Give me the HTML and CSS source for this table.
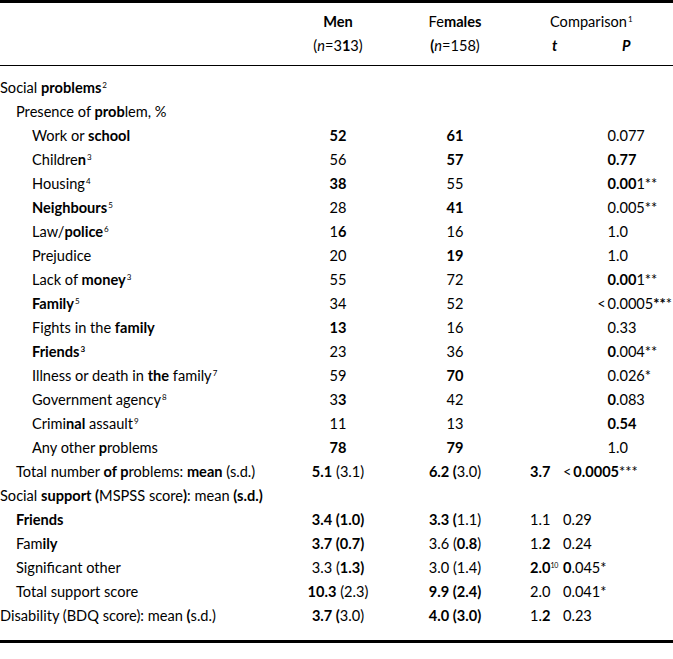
FILE: index.html
```html
<!DOCTYPE html>
<html lang="en">
<head>
<meta charset="utf-8">
<title>Social problems, support and disability</title>
<link rel="stylesheet" href="styles.css">
</head>
<body>
<table class="tbl">
  <colgroup>
    <col class="c-lab"><col class="c-men"><col class="c-fem"><col class="c-t"><col class="c-p">
  </colgroup>
  <thead>
    <tr class="h1">
      <th></th>
      <th class="num"><b>Men</b></th>
      <th class="num">Fe<b>males</b></th>
      <th class="cmp" colspan="2">Comparison<sup>1</sup></th>
    </tr>
    <tr class="h2">
      <th></th>
      <th class="num">(<i>n</i>=3<b>1</b>3)</th>
      <th class="num"><b>(</b><i>n</i>=158)</th>
      <th class="ht"><i>t</i></th>
      <th class="hp"><i>P</i></th>
    </tr>
  </thead>
  <tbody>
    <tr class="first"><td class="l0">Social <b>problems</b><sup>2</sup></td><td></td><td></td><td></td><td></td></tr>
    <tr><td class="l1">Presence of <b>prob</b>lem, %</td><td></td><td></td><td></td><td></td></tr>
    <tr><td class="l2">Work or <b>school</b></td><td class="num"><b>52</b></td><td class="num"><b>61</b></td><td></td><td class="pd"><span class="int">0</span>.077</td></tr>
    <tr><td class="l2">Childre<b>n</b><sup>3</sup></td><td class="num">56</td><td class="num"><b>57</b></td><td></td><td class="pd"><span class="int"><b>0</b></span><b>.77</b></td></tr>
    <tr><td class="l2">Housing<sup>4</sup></td><td class="num"><b>38</b></td><td class="num">55</td><td></td><td class="pd"><span class="int"><b>0</b></span><b>.00</b>1**</td></tr>
    <tr><td class="l2"><b>Neighbours</b><sup>5</sup></td><td class="num">28</td><td class="num"><b>41</b></td><td></td><td class="pd"><span class="int">0</span>.005**</td></tr>
    <tr><td class="l2">Law/<b>police</b><sup>6</sup></td><td class="num">1<b>6</b></td><td class="num">16</td><td></td><td class="pd"><span class="int">1</span>.0</td></tr>
    <tr><td class="l2">Prejudice</td><td class="num">20</td><td class="num"><b>19</b></td><td></td><td class="pd"><span class="int">1</span>.0</td></tr>
    <tr><td class="l2">Lack of <b>money</b><sup>3</sup></td><td class="num">55</td><td class="num">72</td><td></td><td class="pd"><span class="int"><b>0</b></span><b>.00</b>1**</td></tr>
    <tr><td class="l2"><b>Family</b><sup>5</sup></td><td class="num">34</td><td class="num">52</td><td></td><td class="pd"><span class="int">&lt;&#8201;0</span>.0005<b>**</b>*</td></tr>
    <tr><td class="l2">Fights in the <b>family</b></td><td class="num"><b>13</b></td><td class="num">16</td><td></td><td class="pd"><span class="int">0</span>.33</td></tr>
    <tr><td class="l2"><b>Friends<sup>3</sup></b></td><td class="num">23</td><td class="num">36</td><td></td><td class="pd"><span class="int"><b>0</b></span>.004**</td></tr>
    <tr><td class="l2">Illness or death in <b>the</b> family<sup>7</sup></td><td class="num">59</td><td class="num"><b>70</b></td><td></td><td class="pd"><span class="int">0</span>.026*</td></tr>
    <tr><td class="l2">Government agency<sup>8</sup></td><td class="num">3<b>3</b></td><td class="num">42</td><td></td><td class="pd"><span class="int"><b>0</b></span>.083</td></tr>
    <tr><td class="l2">Crimi<b>nal</b> assault<sup>9</sup></td><td class="num">11</td><td class="num">13</td><td></td><td class="pd"><span class="int"><b>0</b></span><b>.54</b></td></tr>
    <tr><td class="l2">Any other <b>p</b>roblems</td><td class="num"><b>78</b></td><td class="num"><b>79</b></td><td></td><td class="pd"><span class="int">1</span>.0</td></tr>
    <tr><td class="l1">Total number <b>of p</b>roblems: <b>mean</b> (s.d.)</td><td class="num"><b>5.1</b> (3.1)</td><td class="num"><b>6.2 (</b>3.0)</td><td class="tv"><b>3.7</b></td><td class="pv">&lt;&#8201;<b>0.0005</b>***</td></tr>
    <tr><td class="l0">Social <b>support (</b>MSPSS score<b>)</b>: mean <b>(s.d.)</b></td><td></td><td></td><td></td><td></td></tr>
    <tr><td class="l1"><b>Friends</b></td><td class="num"><b>3.4 (1.0)</b></td><td class="num"><b>3.3 (</b>1.1)</td><td class="tv">1.1</td><td class="pv">0.29</td></tr>
    <tr><td class="l1">Fam<b>ily</b></td><td class="num"><b>3.7 (0.7)</b></td><td class="num">3.6 (<b>0.8</b>)</td><td class="tv">1.<b>2</b></td><td class="pv">0.24</td></tr>
    <tr><td class="l1">Significant other</td><td class="num">3.3 (<b>1.3)</b></td><td class="num">3.0 (1.4)</td><td class="tv"><b>2.0</b><sup class="tsup">10</sup></td><td class="pv"><b>0</b>.045*</td></tr>
    <tr><td class="l1">Total support score</td><td class="num"><b>10.3</b> (2.3)</td><td class="num"><b>9.9 (2.4)</b></td><td class="tv">2.0</td><td class="pv">0.041*</td></tr>
    <tr class="last"><td class="l0">Disability (BDQ score): mean <b>(</b>s.d.)</td><td class="num"><b>3.7 (</b>3.0)</td><td class="num"><b>4.0 (3.0)</b></td><td class="tv">1.<b>2</b></td><td class="pv">0.23</td></tr>
  </tbody>
</table>
</body>
</html>
```

FILE: styles.css
```css
html, body {
  margin: 0;
  padding: 0;
  background: #ffffff;
}

body {
  font-family: "Lato", "Open Sans", "DejaVu Sans", sans-serif;
  font-size: 14.6px;
  color: #000000;
}

.tbl {
  width: 673px;
  table-layout: fixed;
  border-collapse: collapse;
  border-top: 3px solid #000;
  border-bottom: 3px solid #000;
}

.c-lab { width: 290px; }
.c-men { width: 96px; }
.c-fem { width: 138px; }
.c-t { width: 36px; }
.c-p { width: 113px; }

.tbl th,
.tbl td {
  padding: 0;
  height: 24px;
  line-height: 24px;
  font-weight: normal;
  white-space: nowrap;
  text-align: left;
  vertical-align: middle;
}

.tbl b { font-weight: 700; }

.tbl sup {
  font-size: 8px;
  line-height: 0;
  vertical-align: 5px;
  margin-left: 1px;
}

.tbl sup.tsup {
  font-size: 7px;
  margin-left: 0;
  letter-spacing: -0.3px;
}

.tbl .h1 th { padding-top: 7px; }
.tbl .h2 th { padding-bottom: 7px; border-bottom: 1.5px solid #000; }
.h2 i { font-style: italic; }

.tbl th.cmp { padding-left: 26px; }
.tbl th.ht { padding-left: 28px; }
.tbl th.hp { padding-left: 62px; }
.ht i, .hp i { font-weight: 700; }

.tbl .first td { padding-top: 10px; }
.tbl .last td { padding-bottom: 12px; }

.tbl .num,
.tbl th.num { text-align: center; }

.tbl td.l0 { padding-left: 0; }
.tbl td.l1 { padding-left: 16px; }
.tbl td.l2 { padding-left: 32px; }

.tbl td.tv { padding-left: 6px; overflow: visible; }
.tbl td.pv { padding-left: 3px; }

.int {
  display: inline-block;
  width: 56px;
  text-align: right;
}
```
